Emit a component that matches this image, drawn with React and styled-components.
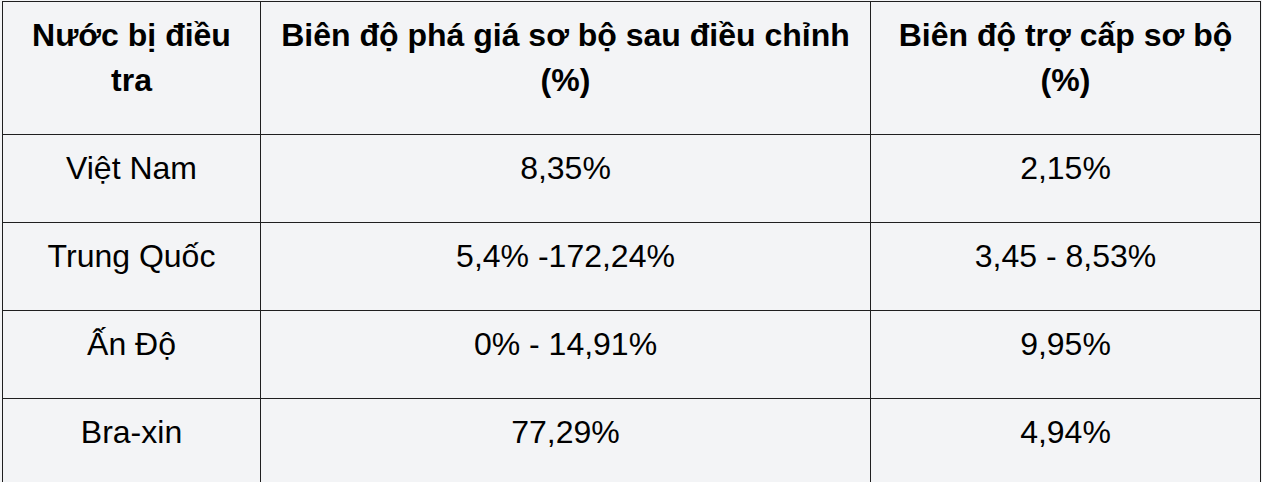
import React from "react";
import styled, { createGlobalStyle } from "styled-components";

const GlobalStyle = createGlobalStyle`
  body {
    margin: 0;
    background: #f3f4f6;
    font-family: "Liberation Sans", Arial, Helvetica, sans-serif;
    color: #000;
  }
`;

const Wrapper = styled.div`
  padding: 1px 0 0 2px;
`;

const Table = styled.table`
  width: 1259px;
  table-layout: fixed;
  border-collapse: collapse;
  background: #f3f4f6;
  font-size: 32px;
  line-height: 45px;
`;

const Col = styled.col`
  width: ${(p) => p.$w}px;
`;

const HeadCell = styled.th`
  border: 1px solid #1f1f1f;
  text-align: center;
  vertical-align: top;
  padding: 11px 16px 31px;
  font-weight: 700;
`;

const Cell = styled.td`
  border: 1px solid #1f1f1f;
  text-align: center;
  vertical-align: top;
  padding: 11px 16px 31px;
  font-weight: 400;
`;

const columns = [258, 610, 390];

const headers = [
  "Nước bị điều tra",
  "Biên độ phá giá sơ bộ sau điều chỉnh (%)",
  "Biên độ trợ cấp sơ bộ (%)",
];

const rows = [
  ["Việt Nam", "8,35%", "2,15%"],
  ["Trung Quốc", "5,4% -172,24%", "3,45 - 8,53%"],
  ["Ấn Độ", "0% - 14,91%", "9,95%"],
  ["Bra-xin", "77,29%", "4,94%"],
];

export default function App() {
  return (
    <>
      <GlobalStyle />
      <Wrapper>
        <Table>
          <colgroup>
            {columns.map((w, i) => (
              <Col key={i} $w={w} />
            ))}
          </colgroup>
          <thead>
            <tr>
              {headers.map((h) => (
                <HeadCell key={h}>{h}</HeadCell>
              ))}
            </tr>
          </thead>
          <tbody>
            {rows.map((r) => (
              <tr key={r[0]}>
                {r.map((c, i) => (
                  <Cell key={i}>{c}</Cell>
                ))}
              </tr>
            ))}
          </tbody>
        </Table>
      </Wrapper>
    </>
  );
}
